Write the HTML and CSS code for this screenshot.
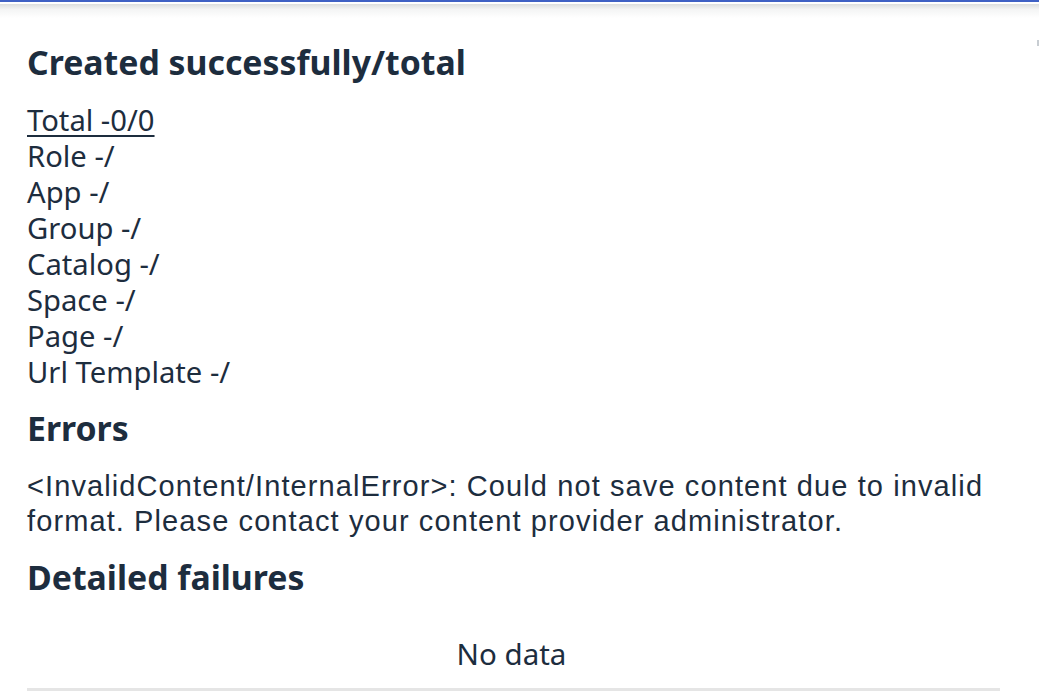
FILE: index.html
```html
<!DOCTYPE html>
<html>
<head>
<meta charset="utf-8">
<link rel="stylesheet" href="styles.css">
</head>
<body>
<div class="topbar"></div>
<div class="shadow"></div>
<main class="content">
  <h2 class="title first">Created successfully/total</h2>
  <div class="stats">
    <div class="line total">Total -0/0</div>
    <div class="line">Role -/</div>
    <div class="line">App -/</div>
    <div class="line">Group -/</div>
    <div class="line">Catalog -/</div>
    <div class="line">Space -/</div>
    <div class="line">Page -/</div>
    <div class="line">Url Template -/</div>
  </div>
  <h2 class="title">Errors</h2>
  <p class="error">&lt;InvalidContent/InternalError&gt;: Could not save content due to invalid format. Please contact your content provider administrator.</p>
  <h2 class="title">Detailed failures</h2>
  <div class="table">
    <div class="nodata">No data</div>
  </div>
</main>
<div class="scrollmark"></div>
</body>
</html>
```
FILE: styles.css
```css
html, body {
  margin: 0;
  padding: 0;
  background: #ffffff;
  overflow: hidden;
}
body {
  width: 1039px;
  height: 696px;
  position: relative;
  color: #1d2d3e;
  font-family: "Noto Sans", "Open Sans", sans-serif;
}
.topbar {
  height: 2px;
  background: #3f61c4;
}
.shadow {
  height: 14px;
  margin-top: 2px;
  background: linear-gradient(#dcdede, #f4f5f5 40%, #ffffff);
}
.content {
  padding: 0 39px 0 27px;
  display: flex;
  flex-direction: column;
}
.title {
  margin: 18px 0 0 0;
  font-size: 33.8px;
  font-weight: 700;
  line-height: 40px;
}
.title.first {
  margin-top: 24px;
}
.stats {
  margin-top: 20px;
  display: flex;
  flex-direction: column;
  font-size: 29.2px;
  line-height: 36px;
}
.total {
  text-decoration: underline;
  text-decoration-thickness: 2px;
  text-underline-offset: 4px;
}
.error {
  margin: 21px 0 0 0;
  font-family: "Liberation Sans", Arial, sans-serif;
  font-size: 29px;
  letter-spacing: 1.1px;
  line-height: 35px;
}
.table {
  padding: 39px 0 16px 0;
  border-bottom: 3px solid #e5e5e5;
  display: flex;
  justify-content: center;
}
.nodata {
  font-size: 29.5px;
  line-height: 36px;
  margin-right: 4px;
}
.scrollmark {
  position: absolute;
  right: 0;
  top: 40px;
  width: 2px;
  height: 6px;
  background: #c8cdd2;
}
```
